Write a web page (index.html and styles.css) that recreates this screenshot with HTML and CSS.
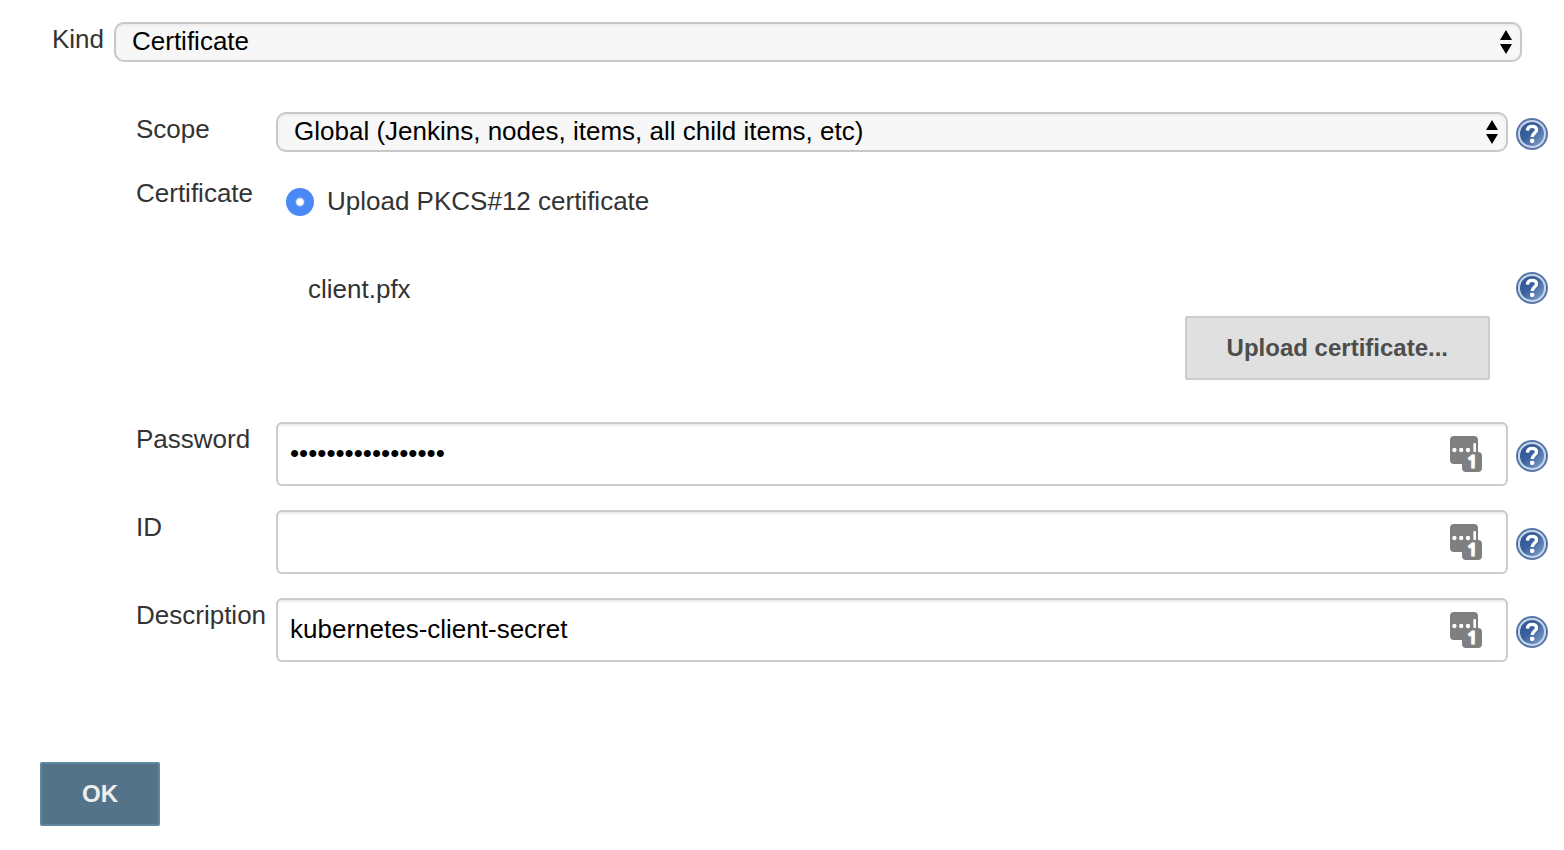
FILE: index.html
```html
<!DOCTYPE html>
<html lang="en">
<head>
<meta charset="utf-8">
<title>Add Credentials</title>
<link rel="stylesheet" href="styles.css">
</head>
<body>
<svg class="sprites" aria-hidden="true">
  <defs>
    <linearGradient id="disc" x1="0" y1="0" x2="1" y2="1">
      <stop offset="0" stop-color="#2f5590"/>
      <stop offset="0.45" stop-color="#3a619d"/>
      <stop offset="1" stop-color="#86a4d0"/>
    </linearGradient>
    <symbol id="help-icon" viewBox="0 0 32 32">
      <circle cx="16" cy="16" r="16" fill="#5877a8"/>
      <circle cx="16" cy="16" r="14" fill="#c9d6ea"/>
      <circle cx="16" cy="16" r="12" fill="url(#disc)"/>
      <path d="M11.4 12.6C11.6 9.7 13.5 8.4 16 8.4C18.7 8.4 20.5 9.8 20.5 12C20.5 15 16.2 15.1 16.2 19" fill="none" stroke="#fff" stroke-width="3.4"/>
      <rect x="14.1" y="20.8" width="4.2" height="4.2" rx="1.4" fill="#fff"/>
    </symbol>
    <symbol id="keys-icon" viewBox="0 0 32 36">
      <path d="M4 0H24Q28 0 28 4V16Q32 16 32 20V32Q32 36 28 36H16Q12 36 12 32V28H4Q0 28 0 24V4Q0 0 4 0Z" fill="#7f7f7f"/>
      <circle cx="4.4" cy="14" r="2.2" fill="#fff"/>
      <circle cx="11.2" cy="14" r="2.2" fill="#fff"/>
      <circle cx="18" cy="14" r="2.2" fill="#fff"/>
      <rect x="23.4" y="7" width="2.6" height="9" rx="1" fill="#fff"/>
    </symbol>
  </defs>
</svg>
<form class="credentials">
  <div class="kind">
    <label class="label" for="kind">Kind</label>
    <span class="select"><select id="kind"><option>Certificate</option></select>
      <svg class="arrows" viewBox="0 0 12 24"><path d="M6 0L12 10H0ZM0 14H12L6 24Z"/></svg></span>
  </div>
  <div class="fields">
    <div class="row">
      <label class="label" for="scope">Scope</label>
      <span class="select"><select id="scope"><option>Global (Jenkins, nodes, items, all child items, etc)</option></select>
        <svg class="arrows" viewBox="0 0 12 24"><path d="M6 0L12 10H0ZM0 14H12L6 24Z"/></svg></span>
      <a class="help select-help" href="#" aria-label="Help for scope"><svg><use href="#help-icon"/></svg></a>
    </div>
    <div class="row certificate">
      <span class="label">Certificate</span>
      <div class="source">
        <label class="choice"><input type="radio" name="source" checked>Upload PKCS#12 certificate</label>
        <div class="file">client.pfx</div>
        <button class="button upload" type="button">Upload certificate...</button>
      </div>
      <a class="help file-help" href="#" aria-label="Help for certificate"><svg><use href="#help-icon"/></svg></a>
    </div>
    <div class="row">
      <label class="label" for="password">Password</label>
      <span class="field"><input class="text" id="password" type="password" value="abcdefghijklmnopq">
        <svg class="keys" viewBox="0 0 32 36"><use href="#keys-icon"/><text x="22" y="32">1</text></svg></span>
      <a class="help" href="#" aria-label="Help for password"><svg><use href="#help-icon"/></svg></a>
    </div>
    <div class="row">
      <label class="label" for="id">ID</label>
      <span class="field"><input class="text" id="id" type="text">
        <svg class="keys" viewBox="0 0 32 36"><use href="#keys-icon"/><text x="22" y="32">1</text></svg></span>
      <a class="help" href="#" aria-label="Help for ID"><svg><use href="#help-icon"/></svg></a>
    </div>
    <div class="row">
      <label class="label" for="description">Description</label>
      <span class="field"><input class="text" id="description" type="text" value="kubernetes-client-secret">
        <svg class="keys" viewBox="0 0 32 36"><use href="#keys-icon"/><text x="22" y="32">1</text></svg></span>
      <a class="help" href="#" aria-label="Help for description"><svg><use href="#help-icon"/></svg></a>
    </div>
  </div>
  <button class="button ok" type="button">OK</button>
</form>
</body>
</html>
```
FILE: styles.css
```css
* { box-sizing: border-box; }

body {
  margin: 0;
  background: #fff;
  color: #333;
  font: 26px/30px "Liberation Sans", Helvetica, Arial, sans-serif;
}

.sprites {
  position: absolute;
  width: 0;
  height: 0;
}

.credentials { padding: 22px 16px 24px 40px; }

.kind {
  display: grid;
  grid-template-columns: 52px 1fr;
  column-gap: 10px;
  padding: 0 26px 0 12px;
}

.label { padding-top: 2px; }

.fields {
  display: flex;
  flex-direction: column;
  gap: 24px;
  padding: 50px 0 100px 96px;
}

.row {
  display: grid;
  grid-template-columns: 140px 1fr 32px;
  align-items: start;
}

.row > :nth-child(2) { margin-right: 8px; }

.select,
.field {
  display: flex;
  position: relative;
}

select {
  appearance: none;
  width: 100%;
  height: 40px;
  padding: 0 40px 2px 16px;
  border: 2px solid #c8c8c8;
  border-radius: 10px;
  background: #f7f7f7;
  box-shadow: inset 0 2px 2px #ececec;
  color: #000;
  font: inherit;
}

.arrows {
  position: absolute;
  top: 8px;
  right: 10px;
  width: 12px;
  height: 24px;
  pointer-events: none;
}

.text {
  width: 100%;
  height: 64px;
  padding: 0 70px 2px 12px;
  border: 2px solid #ccc;
  border-radius: 6px;
  background: #fff;
  box-shadow: inset 0 2px 2px #eee;
  color: #000;
  font: inherit;
}

.keys {
  position: absolute;
  top: 14px;
  right: 26px;
  width: 32px;
  height: 36px;
  overflow: visible;
}

.keys text {
  fill: #fff;
  stroke: #fff;
  stroke-width: 1px;
  font: bold 17px "Open Sans", sans-serif;
  text-anchor: middle;
}

.help {
  height: 32px;
  margin-top: 18px;
}

.help svg {
  display: block;
  width: 32px;
  height: 32px;
}

.select-help { margin-top: 6px; }

.certificate { padding-bottom: 18px; }

.file-help { margin-top: 96px; }

.source {
  display: flex;
  flex-direction: column;
}

.choice {
  display: flex;
  align-items: center;
  gap: 13px;
  padding: 10px 10px 0;
}

.choice input {
  appearance: none;
  width: 28px;
  height: 28px;
  margin: 2px 0 0;
  border-radius: 50%;
  background: radial-gradient(circle, #fff 3px, #4b89f7 5px);
}

.file { padding: 58px 32px 12px; }

.button {
  height: 64px;
  padding: 0 40px;
  border: 2px solid #ccc;
  border-radius: 2px;
  background: #e0e0e0;
  color: #4d4d4d;
  font: bold 24px/30px "Liberation Sans", Helvetica, Arial, sans-serif;
}

.upload {
  align-self: flex-end;
  margin-right: 18px;
}

.ok {
  display: block;
  border-color: #5f87a0;
  background: #547388;
  color: #eee;
}
```
